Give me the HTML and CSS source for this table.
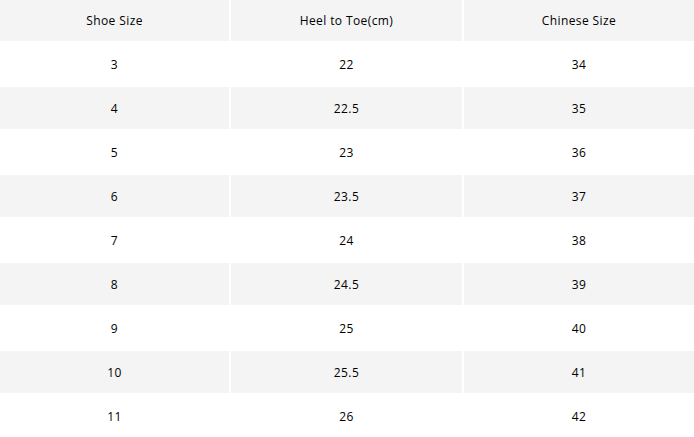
FILE: index.html
```html
<!DOCTYPE html>
<html>
<head>
<meta charset="utf-8">
<link rel="stylesheet" href="styles.css">
</head>
<body>
<div class="table">
  <div class="row head"><div class="cell">Shoe Size</div><div class="cell">Heel to Toe(cm)</div><div class="cell">Chinese Size</div></div>
  <div class="row"><div class="cell">3</div><div class="cell">22</div><div class="cell">34</div></div>
  <div class="row alt"><div class="cell">4</div><div class="cell">22.5</div><div class="cell">35</div></div>
  <div class="row"><div class="cell">5</div><div class="cell">23</div><div class="cell">36</div></div>
  <div class="row alt"><div class="cell">6</div><div class="cell">23.5</div><div class="cell">37</div></div>
  <div class="row"><div class="cell">7</div><div class="cell">24</div><div class="cell">38</div></div>
  <div class="row alt"><div class="cell">8</div><div class="cell">24.5</div><div class="cell">39</div></div>
  <div class="row"><div class="cell">9</div><div class="cell">25</div><div class="cell">40</div></div>
  <div class="row alt"><div class="cell">10</div><div class="cell">25.5</div><div class="cell">41</div></div>
  <div class="row"><div class="cell">11</div><div class="cell">26</div><div class="cell">42</div></div>
</div>
</body>
</html>
```
FILE: styles.css
```css
html, body {
  margin: 0;
  padding: 0;
  background: #fff;
}
body {
  font-family: "Open Sans", "Noto Sans", sans-serif;
  font-size: 12px;
  letter-spacing: 0.4px;
  color: #000;
}
.table {
  display: flex;
  flex-direction: column;
  gap: 2px;
  width: 694px;
}
.row {
  display: grid;
  grid-template-columns: 229px 231px 1fr;
  gap: 2px;
  height: 42px;
}
.row.head {
  height: 41px;
}
.cell {
  display: flex;
  align-items: center;
  justify-content: center;
}
.head .cell,
.alt .cell {
  background: #f4f4f4;
}
```
